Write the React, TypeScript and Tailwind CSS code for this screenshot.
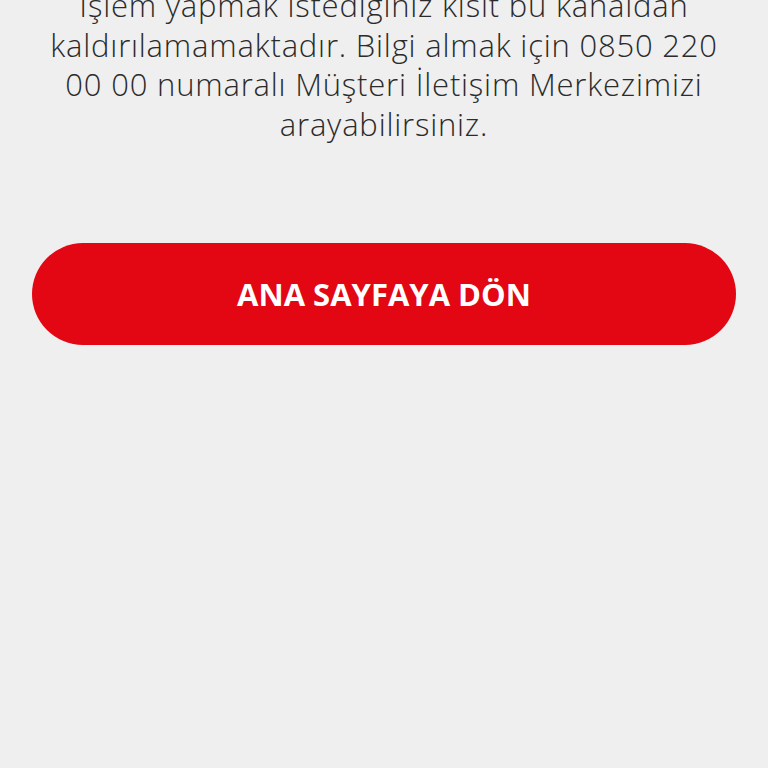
import React from 'react';

export default function App() {
  return (
    <div className="min-h-[768px] w-full bg-[#efefef] overflow-hidden font-['Open_Sans','Noto_Sans',sans-serif]">
      <div className="px-8 -mt-[14px]">
        <p className="px-2 text-center text-[31px] leading-[39.5px] tracking-[0.8px] text-[#2b2b2b] font-light">
          İşlem yapmak istediğiniz kısıt bu kanaldan kaldırılamamaktadır. Bilgi almak için 0850 220 00 00 numaralı Müşteri İletişim Merkezimizi arayabilirsiniz.
        </p>
        <button className="mt-[99px] w-full h-[102px] rounded-full bg-[#e30613] text-white text-[31px] font-bold">
          ANA SAYFAYA DÖN
        </button>
      </div>
    </div>
  );
}
